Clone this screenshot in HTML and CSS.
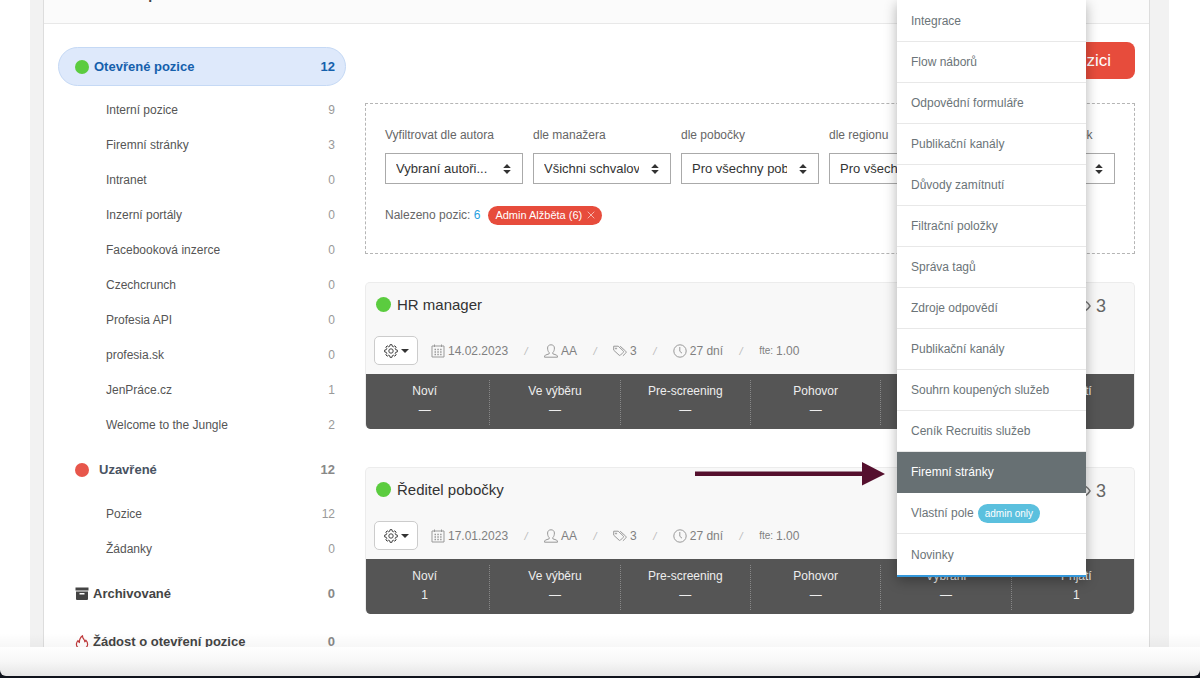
FILE: index.html
```html
<!DOCTYPE html>
<html lang="cs">
<head>
<meta charset="utf-8">
<title>Otevřené pozice</title>
<link rel="stylesheet" href="styles.css">
</head>
<body>
<svg class="sprite" aria-hidden="true">
  <symbol id="i-gear" viewBox="0 0 14 14"><path d="M6 .7h2l.3 1.6 1.1.5L10.800 1.800l1.400 1.400-1 1.400.5 1.100 1.600.3v2l-1.600.3-.5 1.100 1 1.400-1.400 1.400-1.400-1-1.100.5L8 13.300H6l-.3-1.600-1.100-.5-1.400 1-1.400-1.400 1-1.400-.5-1.100L.7 8V6l1.600-.3.5-1.100-1-1.400 1.400-1.400 1.400 1 1.100-.5z"/><circle cx="7" cy="7" r="2.200"/></symbol>
  <symbol id="i-cal" viewBox="0 0 14 14"><path d="M1 2h12v11H1zM3.500 .5v2.500M10.500 .5v2.500"/><path d="M3.500 5.500h7.500M3.500 8h7.500M3.500 10.500h7.500" stroke-dasharray="1.500 1.300" stroke-width="1.300"/></symbol>
  <symbol id="i-user" viewBox="0 0 14 14"><path d="M5.200 8.600C3.900 7.400 3.600 5.600 3.600 4 3.600 2 5 .8 7 .8S10.400 2 10.400 4c0 1.600-.3 3.400-1.600 4.600v1.200l3.800 1.300c.6.3.9 1 .9 2.100H.5c0-1.100.3-1.800.9-2.100l3.800-1.300z"/></symbol>
  <symbol id="i-tag" viewBox="0 0 14 14"><path d="M.7 2.200h4.500l5 4.700c.5.500.5 1 0 1.500l-2.700 2.700c-.5.500-1 .5-1.500 0L.7 6.200zM7.200 2.200l5.500 5c.7.600.7 1.200.1 1.800l-2.900 2.800"/><circle cx="3" cy="4.500" r=".6"/></symbol>
  <symbol id="i-clock" viewBox="0 0 14 14"><circle cx="7" cy="7" r="6.200"/><path d="M6.800 3v4.300l2.200 1.900"/></symbol>
  <symbol id="i-eye" viewBox="0 0 18 14"><path d="M1 7c4.500-7.200 11.500-7.200 16 0-4.500 7.200-11.500 7.200-16 0z"/><circle cx="9" cy="7" r="2.500"/></symbol>
  <symbol id="i-sort" viewBox="0 0 8 10"><path d="M4 0l3.800 4H.2zM4 10L.2 6h7.600z"/></symbol>
</svg>

<div class="window">
  <div class="viewport">
    <div class="panel">
      <header class="panel-head"><h1>Seznam pozic</h1></header>
      <div class="layout">
        <nav class="sidebar" aria-label="Pozice">
          <a class="group active" href="#"><i class="dot green"></i><span>Otevřené pozice</span><b>12</b></a>
          <ul>
            <li><a href="#"><span>Interní pozice</span><b>9</b></a></li>
            <li><a href="#"><span>Firemní stránky</span><b>3</b></a></li>
            <li><a href="#"><span>Intranet</span><b>0</b></a></li>
            <li><a href="#"><span>Inzerní portály</span><b>0</b></a></li>
            <li><a href="#"><span>Facebooková inzerce</span><b>0</b></a></li>
            <li><a href="#"><span>Czechcrunch</span><b>0</b></a></li>
            <li><a href="#"><span>Profesia API</span><b>0</b></a></li>
            <li><a href="#"><span>profesia.sk</span><b>0</b></a></li>
            <li><a href="#"><span>JenPráce.cz</span><b>1</b></a></li>
            <li><a href="#"><span>Welcome to the Jungle</span><b>2</b></a></li>
          </ul>
          <a class="group closed" href="#"><i class="dot red"></i><span>Uzavřené</span><b>12</b></a>
          <ul>
            <li><a href="#"><span>Pozice</span><b>12</b></a></li>
            <li><a href="#"><span>Žádanky</span><b>0</b></a></li>
          </ul>
          <a class="group" href="#"><svg class="gicon" viewBox="0 0 14 13" aria-hidden="true"><path fill="#444" fill-rule="evenodd" d="M.5 0h13v3H.5zM1 4h12v7.500q0 1-1 1H2q-1 0-1-1zM4.500 5.500v1.500h5V5.500z"/></svg><span>Archivované</span><b>0</b></a>
          <a class="group" href="#"><svg class="gicon" viewBox="0 0 14 14" aria-hidden="true"><path fill="none" stroke="#c0393b" stroke-width="1.200" stroke-linejoin="round" d="M4.500 13.300C2.300 12.500 1.200 10.800 1.500 8.700c.1-1.300.8-2.300 1.500-3.200.2 1 .6 1.600 1.400 2C4.300 4.600 5.300 2.300 7.500.7c-.1 1.800.6 2.700 1.500 3.800.6.800.8 1.500.8 2.300.5-.3.9-.8 1-1.600 1.200 1.300 1.900 2.700 1.800 4.300-.1 1.800-1.100 3.100-3.100 3.800"/></svg><span>Žádost o otevření pozice</span><b>0</b></a>
        </nav>

        <main class="content">
          <div class="actions"><button class="add" type="button">Přidat novou pozici</button></div>

          <form class="filters">
            <div class="fields">
              <div class="field"><label for="f1">Vyfiltrovat dle autora</label><div class="pick"><select id="f1"><option>Vybraní autoři...</option></select><svg><use href="#i-sort"/></svg></div></div>
              <div class="field"><label for="f2">dle manažera</label><div class="pick"><select id="f2"><option>Všichni schvalovatelé</option></select><svg><use href="#i-sort"/></svg></div></div>
              <div class="field"><label for="f3">dle pobočky</label><div class="pick"><select id="f3"><option>Pro všechny pobočky</option></select><svg><use href="#i-sort"/></svg></div></div>
              <div class="field"><label for="f4">dle regionu</label><div class="pick"><select id="f4"><option>Pro všechny regiony</option></select><svg><use href="#i-sort"/></svg></div></div>
              <div class="field"><label for="f5">dle veřejných položek</label><div class="pick"><select id="f5"><option>Všechny</option></select><svg><use href="#i-sort"/></svg></div></div>
            </div>
            <div class="found"><span>Nalezeno pozic: <a href="#">6</a></span><button class="chip" type="button">Admin Alžběta (6)<svg viewBox="0 0 8 8" aria-hidden="true"><path d="M.7 .7l6.600 6.600M7.300 .7L.7 7.300"/></svg></button></div>
          </form>

          <article class="job">
            <div class="job-head">
              <h2><i class="dot green"></i><a href="#">HR manager</a></h2>
              <span class="views"><svg><use href="#i-eye"/></svg>3</span>
            </div>
            <div class="meta">
              <button class="cog" type="button" aria-label="Nastavení"><svg><use href="#i-gear"/></svg><i></i></button>
              <span><svg><use href="#i-cal"/></svg>14.02.2023</span><em>/</em>
              <span><svg><use href="#i-user"/></svg>AA</span><em>/</em>
              <span><svg><use href="#i-tag"/></svg>3</span><em>/</em>
              <span><svg><use href="#i-clock"/></svg>27 dní</span><em>/</em>
              <span><small>fte:</small>1.00</span>
            </div>
            <dl class="stats">
              <div><dt>Noví</dt><dd>—</dd></div>
              <div><dt>Ve výběru</dt><dd>—</dd></div>
              <div><dt>Pre-screening</dt><dd>—</dd></div>
              <div><dt>Pohovor</dt><dd>—</dd></div>
              <div><dt>Vybráni</dt><dd>—</dd></div>
              <div><dt>Přijatí</dt><dd>—</dd></div>
            </dl>
          </article>

          <article class="job">
            <div class="job-head">
              <h2><i class="dot green"></i><a href="#">Ředitel pobočky</a></h2>
              <span class="views"><svg><use href="#i-eye"/></svg>3</span>
            </div>
            <div class="meta">
              <button class="cog" type="button" aria-label="Nastavení"><svg><use href="#i-gear"/></svg><i></i></button>
              <span><svg><use href="#i-cal"/></svg>17.01.2023</span><em>/</em>
              <span><svg><use href="#i-user"/></svg>AA</span><em>/</em>
              <span><svg><use href="#i-tag"/></svg>3</span><em>/</em>
              <span><svg><use href="#i-clock"/></svg>27 dní</span><em>/</em>
              <span><small>fte:</small>1.00</span>
            </div>
            <dl class="stats">
              <div><dt>Noví</dt><dd>1</dd></div>
              <div><dt>Ve výběru</dt><dd>—</dd></div>
              <div><dt>Pre-screening</dt><dd>—</dd></div>
              <div><dt>Pohovor</dt><dd>—</dd></div>
              <div><dt>Vybráni</dt><dd>—</dd></div>
              <div><dt>Přijatí</dt><dd>1</dd></div>
            </dl>
          </article>
        </main>
      </div>

      <ul class="menu">
        <li><a href="#">Integrace</a></li>
        <li><a href="#">Flow náborů</a></li>
        <li><a href="#">Odpovědní formuláře</a></li>
        <li><a href="#">Publikační kanály</a></li>
        <li><a href="#">Důvody zamítnutí</a></li>
        <li><a href="#">Filtrační položky</a></li>
        <li><a href="#">Správa tagů</a></li>
        <li><a href="#">Zdroje odpovědí</a></li>
        <li><a href="#">Publikační kanály</a></li>
        <li><a href="#">Souhrn koupených služeb</a></li>
        <li><a href="#">Ceník Recruitis služeb</a></li>
        <li class="current"><a href="#">Firemní stránky</a></li>
        <li><a href="#">Vlastní pole<span class="badge">admin only</span></a></li>
        <li><a href="#">Novinky</a></li>
      </ul>
      <svg class="arrow" viewBox="0 0 191 26" aria-hidden="true"><path d="M0 10.500h167V1l23 12-23 11.500v-9.500H0z" fill="#55102e"/></svg>
    </div>
  </div>
  <div class="shelf"></div>
</div>
</body>
</html>
```
FILE: styles.css
```css
* { box-sizing: border-box; }
body { margin: 0; background: #10131c; font: 12px/20px "Liberation Sans", Arial, sans-serif; color: #555; }
a { color: inherit; text-decoration: none; }
ul, dl, dd, h1, h2 { margin: 0; padding: 0; list-style: none; }
button, select { font: inherit; color: inherit; }
svg { flex: none; }
.sprite { position: absolute; width: 0; height: 0; }

.window { display: flex; flex-direction: column; height: 100vh; padding-bottom: 2px; overflow: hidden; }
.viewport { flex: 1; min-height: 0; overflow: hidden; padding: 0 31px 0 30px; background: #fff; }
.shelf { position: relative; height: 29px; background: linear-gradient(#fefefe, #f7f7f7 50%, #e6e6e6); border-radius: 0 0 6px 6px; }
.shelf::before { content: ""; position: absolute; inset: -14px 0 auto; height: 14px; background: linear-gradient(transparent, rgba(0, 0, 0, .03)); }

.panel { position: relative; min-height: 100%; background: #fff; border: solid #f2f2f2; border-width: 0 20px 0 14px; }
.panel-head { display: flex; align-items: flex-start; height: 24px; padding-left: 17px; overflow: hidden; background: #fbfbfb; border-bottom: 1px solid #e8e8e8; box-shadow: -1px 0 0 #ddd, 1px 0 0 #ddd; }
.panel-head h1 { margin-top: -20px; font-size: 22px; font-weight: 400; line-height: 20px; color: #444; }
.layout { display: grid; grid-template-columns: 288px minmax(0, 1fr); gap: 19px; padding: 18px 14px 0; box-shadow: -1px 0 0 #ddd, 1px 0 0 #ddd; }

.sidebar { padding-top: 5px; }
.sidebar b { margin-left: auto; color: #999; font-weight: 400; }
.group { display: flex; align-items: center; height: 39px; margin-bottom: 9px; padding: 0 10px 0 16px; border: 1px solid transparent; border-radius: 20px; font-size: 13px; font-weight: 700; color: #444; }
.group b { font-weight: 700; color: #888; }
.group .dot { margin-right: 5px; }
.gicon { width: 14px; height: 14px; margin-right: 4px; }
.group.active { margin-bottom: 7px; background: #dee9fb; border-color: #c5d9f5; color: #1560ac; }
.group.active b { color: #1560ac; }
.group.closed { margin-bottom: 8px; color: #485261; }
.group.closed .dot { margin-right: 10px; }
.dot { flex: none; width: 14px; height: 14px; border-radius: 50%; }
.green { background: #5bcc3f; }
.red { background: #e7564b; }
.sidebar ul { margin-bottom: 7px; }
.sidebar li a { display: flex; padding: 0 11px 0 48px; line-height: 35px; }

.actions { display: flex; justify-content: flex-end; }
.add { height: 37px; padding: 0 24px; border: 0; border-radius: 8px; background: #e74c3c; color: #fff; font-size: 17px; }
.filters { height: 151px; margin: 24px 0 28px; padding: 21px 19px; border: 1px dashed #b5b5b5; }
.fields { display: grid; grid-template-columns: repeat(5, minmax(0, 1fr)); gap: 10px; }
.field label { display: block; margin-bottom: 8px; white-space: nowrap; color: #666; }
.pick { position: relative; }
.pick select { display: block; width: 100%; height: 31px; padding: 0 31px 0 10px; border: 1px solid #aaa; border-radius: 0; background: #fff; color: #333; font-size: 13px; appearance: none; }
.pick svg { position: absolute; right: 12px; top: 11px; width: 8px; height: 10px; fill: #333; pointer-events: none; }
.found { display: flex; align-items: center; gap: 8px; margin-top: 21px; color: #666; }
.found a { color: #2a9fe0; }
.chip { display: flex; align-items: center; gap: 5px; height: 19px; padding: 0 7px; border: 0; border-radius: 10px; background: #e74c3c; color: #fff; font-size: 11px; }
.chip svg { width: 8px; height: 8px; stroke: #f5b5ae; fill: none; }

.job { margin-bottom: 38px; border: 1px solid #ececec; border-bottom: 0; border-radius: 5px; background: #f8f8f8; overflow: hidden; }
.job-head { display: flex; justify-content: space-between; align-items: center; height: 46px; padding: 0 28px 0 10px; }
.job-head h2 { display: flex; align-items: center; gap: 6px; padding-bottom: 3px; font-size: 15px; font-weight: 400; color: #333; }
.job-head .dot { width: 15px; height: 15px; }
.views { display: flex; align-items: center; gap: 5px; font-size: 18px; color: #666; }
.views svg { width: 18px; height: 14px; fill: none; stroke: #777; stroke-width: 1.5; }
.meta { display: flex; align-items: center; height: 45px; padding: 0 8px 2px; color: #808080; }
.meta span { display: flex; align-items: center; gap: 3px; }
.meta svg { width: 14px; height: 14px; fill: none; stroke: #999; stroke-width: 1; }
.meta em { width: 36px; text-align: center; font-size: 11px; color: #bbb; }
.meta small { font-size: 10px; }
.meta .cog { display: flex; align-items: center; gap: 3px; width: 44px; height: 29px; margin-right: 13px; padding: 0 9px; border: 1px solid #ccc; border-radius: 5px; background: #fff; }
.meta .cog svg { stroke: #444; }
.cog i { border: 4px solid transparent; border-top-color: #333; border-bottom: 0; }
.stats { display: grid; grid-template-columns: repeat(6, 1fr); margin: 0 -7px; padding: 6px 0 4px; background: #555; color: #eee; text-align: center; }
.stats div { height: 45px; border-left: 1px dotted #888; }
.stats dt { line-height: 22px; }
.stats dd { line-height: 16px; }

.menu { position: absolute; z-index: 2; top: 0; right: 63px; width: 189px; padding-top: 1px; background: #fff; border-bottom: 2px solid #3498db; box-shadow: 0 4px 12px rgba(0, 0, 0, .3); color: #6b7478; }
.menu a { display: flex; align-items: center; height: 41px; padding: 0 14px; border-bottom: 1px solid #e8e8e8; white-space: nowrap; }
.menu li:last-child a { border-bottom: 0; }
.menu .current a { background: #677073; border-color: #677073; color: #fff; }
.badge { margin-left: 4px; padding: 0 7px; border-radius: 10px; background: #5bc0de; color: #fff; font-size: 10px; line-height: 19px; }
.arrow { position: absolute; z-index: 3; top: 461px; right: 263px; width: 191px; height: 26px; }
```
